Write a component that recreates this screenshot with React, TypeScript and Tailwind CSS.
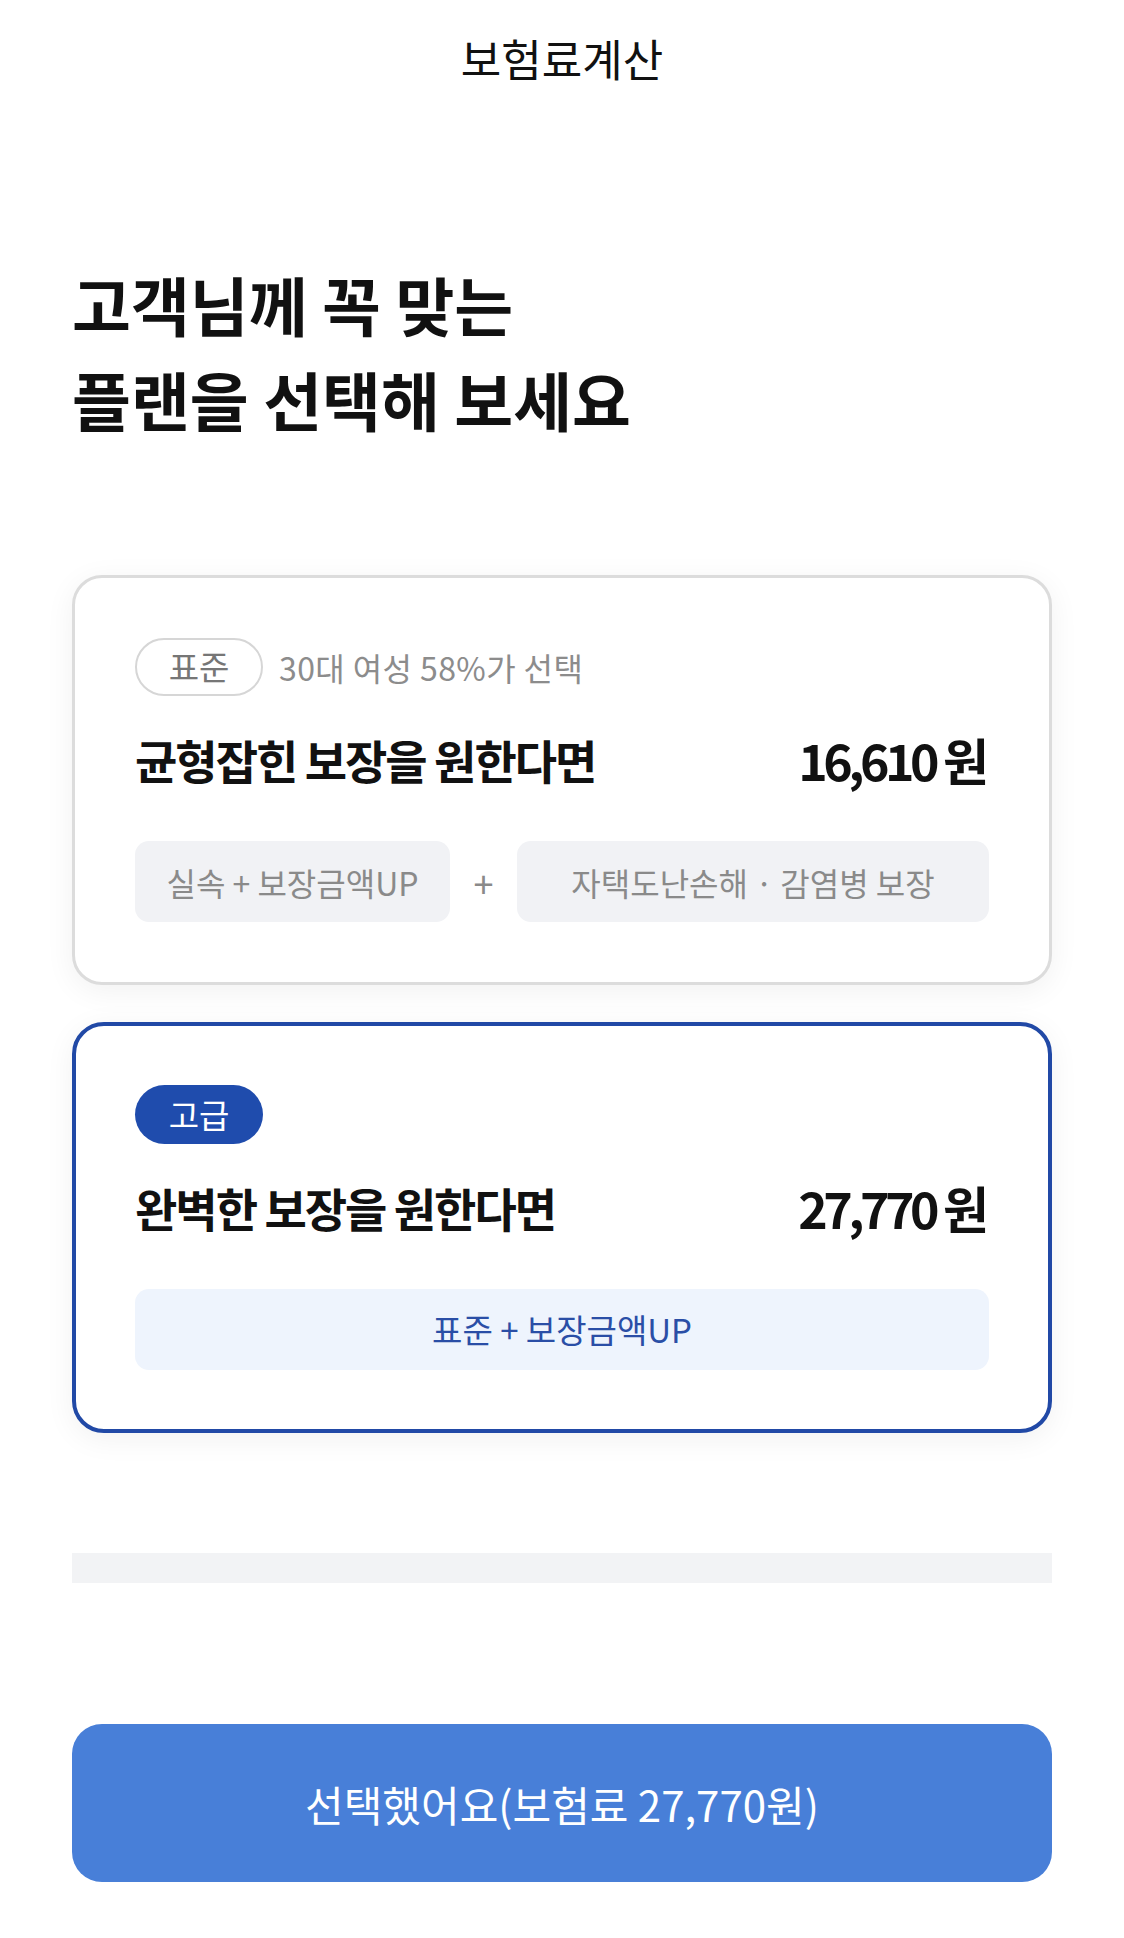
const plans = [
  {
    id: 'standard',
    label: '표준',
    note: '30대 여성 58%가 선택',
    title: '균형잡힌 보장을 원한다면',
    price: '16,610',
  },
  {
    id: 'premium',
    label: '고급',
    title: '완벽한 보장을 원한다면',
    price: '27,770',
  },
];

function Price({ value }: { value: string }) {
  return (
    <span className="flex items-baseline text-[50px] font-bold text-[#111]">
      <span className="tracking-[-4.5px]">{value}</span>
      <span className="ml-[8px]">원</span>
    </span>
  );
}

function StandardCard() {
  const p = plans[0];
  return (
    <div className="rounded-[30px] border-[3px] border-[#dcdcdc] bg-white p-[60px] shadow-[0_6px_30px_rgba(0,0,0,0.06)]">
      <div className="flex h-[58px] items-center gap-4">
        <span className="flex h-[58px] w-[128px] items-center justify-center rounded-full border-2 border-[#d6d6d6] text-[33px] text-[#767676]">
          {p.label}
        </span>
        <span className="text-[32px] tracking-[0.4px] text-[#8c8c8c]">{p.note}</span>
      </div>
      <div className="mt-[33px] flex h-[60px] items-center justify-between">
        <span className="text-[46px] font-bold tracking-[-2px] text-[#111]">{p.title}</span>
        <Price value={p.price} />
      </div>
      <div className="mt-[52px] flex h-[81px] items-stretch">
        <div className="flex w-[315px] items-center justify-center rounded-[14px] bg-[#f1f2f5] text-[32px] text-[#8a8a8a]">
          실속 + 보장금액UP
        </div>
        <div className="flex w-[67px] items-center justify-center text-[36px] text-[#8a8a8a]">+</div>
        <div className="flex flex-1 items-center justify-center rounded-[14px] bg-[#f1f2f5] text-[32px] text-[#8a8a8a]">
          자택도난손해 · 감염병 보장
        </div>
      </div>
    </div>
  );
}

function PremiumCard() {
  const p = plans[1];
  return (
    <div className="rounded-[32px] border-4 border-[#2149a6] bg-white p-[59px] shadow-[0_6px_30px_rgba(0,0,0,0.06)]">
      <div className="flex h-[59px] items-center">
        <span className="flex h-[59px] w-[128px] items-center justify-center rounded-full bg-[#1f4cad] text-[33px] text-white">
          {p.label}
        </span>
      </div>
      <div className="mt-[33px] flex h-[60px] items-center justify-between">
        <span className="text-[46px] font-bold tracking-[-2px] text-[#111]">{p.title}</span>
        <Price value={p.price} />
      </div>
      <div className="mt-[52px] flex h-[81px] items-center justify-center rounded-[14px] bg-[#eef4fd] text-[33px] text-[#2a4ea6]">
        표준 + 보장금액UP
      </div>
    </div>
  );
}

export default function App() {
  return (
    <div className="flex min-h-[1938px] w-full flex-col bg-white font-['Noto_Sans_CJK_KR','Noto_Sans',sans-serif] text-[#111]">
      <header className="flex h-[116px] items-center justify-center">
        <h1 className="text-[44px] text-[#111]">보험료계산</h1>
      </header>

      <main className="mx-[72px] flex flex-col">
        <h2 className="mt-[140px] text-[64px] font-bold leading-[95px] text-[#111]">
          고객님께 꼭 맞는
          <br />
          플랜을 선택해 보세요
        </h2>

        <div className="mt-[129px] flex flex-col gap-[37px]">
          <StandardCard />
          <PremiumCard />
        </div>

        <div className="mt-[120px] h-[30px] bg-[#f2f3f5]" />

        <button className="mt-[141px] mb-[56px] flex h-[158px] items-center justify-center rounded-[30px] bg-[#487fd8] text-[42px] text-white">
          선택했어요(보험료 27,770원)
        </button>
      </main>
    </div>
  );
}
